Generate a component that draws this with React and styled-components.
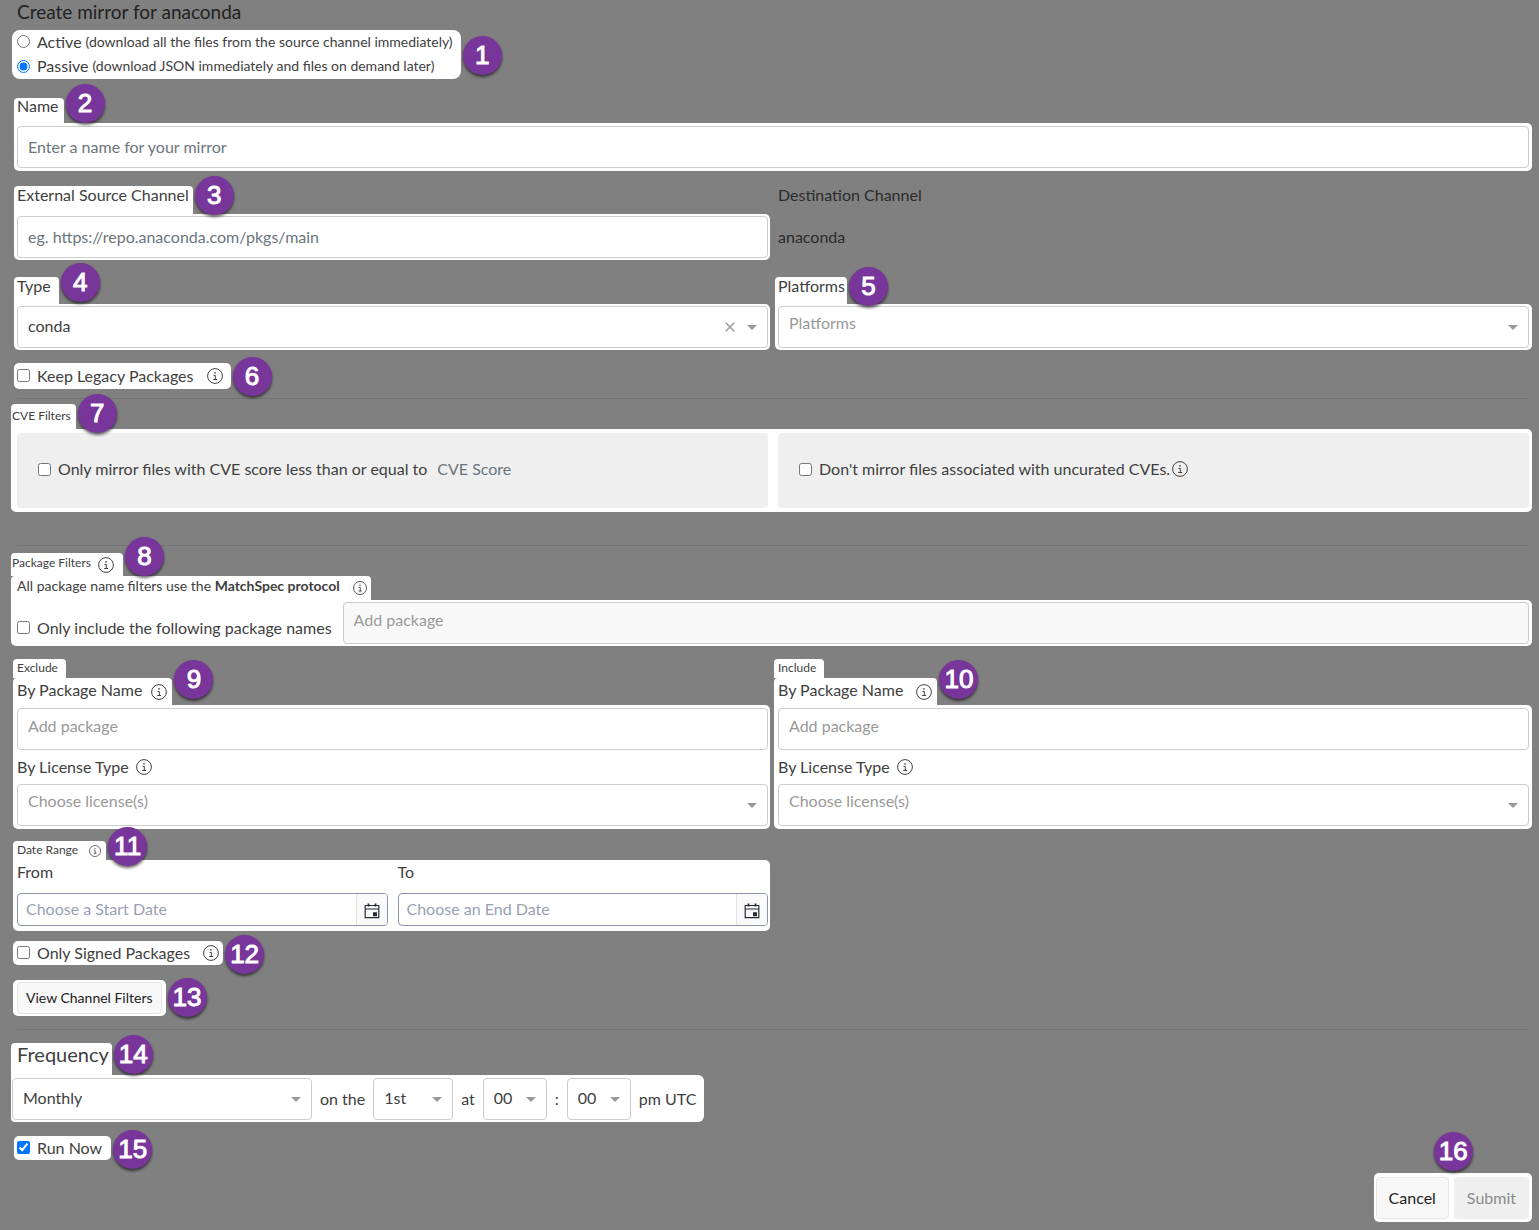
import React from 'react'
import styled, { createGlobalStyle } from 'styled-components'

const GlobalStyle = createGlobalStyle`
  * {
    box-sizing: border-box;
  }

  body {
    margin: 0;
    background: #808080;
    color: #404040;
    font: 16px/24px Lato, "Open Sans", sans-serif;
  }

  input, select, button {
    font: inherit;
    color: inherit;
    margin: 0;
  }
`

const Form = styled.form`
  padding: 0 10px 8px 17px;
  white-space: nowrap;
`

const Title = styled.h1`
  margin: 0;
  height: 30px;
  font-size: 19px;
  font-weight: 400;
  line-height: 24px;
  color: #222;
`

// White area behind a group; it reaches $out px past the content on the left
const Panel = styled.div`
  margin: 0 -3px 0 -${({ $out }) => $out || 3}px;
  padding: ${({ $pad }) => $pad || 2}px 3px ${({ $pad }) => $pad || 2}px ${({ $out }) => $out || 3}px;
  background: #fff;
  border-radius: 0 5px 5px 5px;
`

const DatePanel = styled(Panel)`
  padding-top: 0;
`

const Columns = styled.div`
  display: grid;
  grid-template-columns: 1fr 1fr;
  gap: 10px;

  > div:first-child > ${Panel} {
    margin-right: -2px;
    padding-right: 2px;
  }
`

const Section = styled.div`
  margin-top: ${({ $top }) => $top || 0}px;
`

const Tab = styled.div`
  position: relative;
  display: flex;
  align-items: flex-start;
  width: fit-content;
  height: ${({ $height }) => $height || 27}px;
  margin-left: -${({ $out }) => $out || 3}px;
  padding: 0 ${({ $end }) => $end || 4}px 0 ${({ $inset }) => $inset || 3}px;
  background: #fff;
  border-radius: 4px 4px 0 0;
  font-size: ${({ $size }) => $size || 16}px;
  line-height: ${({ $line }) => $line || 18}px;

  svg {
    align-self: center;
  }
`

const Chip = styled.div`
  position: relative;
  width: fit-content;
  margin-left: -${({ $out }) => $out || 3}px;
  padding: ${({ $pad }) => $pad || 0}px ${({ $end }) => $end || 8}px ${({ $pad }) => $pad || 0}px ${({ $out }) => $out || 3}px;
  background: #fff;
  border-radius: ${({ $radius }) => $radius || 5}px;
`

const Badge = styled.span`
  position: absolute;
  z-index: 1;
  top: ${({ $rise }) => -$rise}px;
  left: calc(100% + 2px);
  width: 39px;
  height: 39px;
  border-radius: 50%;
  background: #78359a;
  box-shadow: 0 2px 3px rgba(0, 0, 0, .6);
  color: #fff;
  font: 26px/38px "Liberation Sans", Arial, sans-serif;
  -webkit-text-stroke: 1px #fff;
  text-align: center;
`

const Option = styled.label`
  display: flex;
  align-items: center;
  height: ${({ $height }) => $height || 24}px;
  padding-bottom: 1px;

  input {
    flex: none;
    width: 13px;
    height: 13px;
    margin-right: 7px;
  }
`

const Hint = styled.small`
  margin-left: 4px;
  font-size: 14px;
`

const TextInput = styled.input`
  display: block;
  width: 100%;
  height: 42px;
  padding: ${({ $raised }) => ($raised ? '0 10px 8px' : '0 10px 2px')};
  border: 1px solid #ccc;
  border-radius: 4px;
  background: ${({ disabled }) => (disabled ? '#f9f9f9' : '#fff')};

  &::placeholder {
    color: ${({ $raised }) => ($raised ? '#999' : '#6c757d')};
    opacity: 1;
  }
`

const SelectBox = styled.div`
  position: relative;
  width: ${({ $width }) => ($width ? `${$width}px` : '100%')};

  > svg {
    position: absolute;
    right: 11px;
    top: 19px;
    pointer-events: none;
  }
`

const SelectInput = styled.select`
  appearance: none;
  display: block;
  width: 100%;
  height: 42px;
  padding: ${({ $empty }) => ($empty ? '0 10px 8px' : '0 10px 2px')};
  border: 1px solid #ccc;
  border-radius: 4px;
  background: #fff;
  color: ${({ $empty }) => ($empty ? '#999' : '#404040')};
`

const ClearButton = styled.button`
  position: absolute;
  top: 12px;
  right: 30px;
  width: 17px;
  height: 18px;
  padding: 0;
  border: 0;
  background: none;

  svg {
    display: block;
    margin: 0 auto;
  }
`

const Destination = styled.dl`
  margin: 0;
  color: #2b2b2b;

  dt {
    height: 30px;
    line-height: 18px;
  }

  dd {
    margin: 0;
    line-height: 42px;
  }
`

const Rule = styled.hr`
  height: 1px;
  margin: ${({ $top, $bottom }) => `${$top}px 0 ${$bottom}px`};
  border: 0;
  background: #747474;
`

const CveCard = styled.div`
  display: flex;
  align-items: center;
  height: 75px;
  padding: 0 0 2px 21px;
  border-radius: 4px;
  background: #efefef;
`

const ScoreInput = styled.input`
  width: 100px;
  margin-left: 10px;
  padding: 0 0 1px;
  border: 0;
  background: none;

  &::placeholder {
    color: #6c757d;
    opacity: 1;
  }
`

const PackageRow = styled.div`
  display: flex;
  align-items: center;
  gap: 11px;

  label {
    margin-top: 10px;
  }

  input[type='text'] {
    flex: 1;
  }
`

const FieldLabel = styled.label`
  display: flex;
  align-items: center;
  height: 34px;
`

const DateLabel = styled.label`
  display: block;
  height: 33px;
`

const DateBox = styled.div`
  display: flex;
  height: 33px;
  overflow: hidden;
  border: 1px solid #8b93a7;
  border-radius: 4px;

  input {
    flex: 1;
    min-width: 0;
    padding: 0 8px 2px;
    border: 0;
    background: none;
  }

  input::placeholder {
    color: #9a9fb5;
    opacity: 1;
  }

  button {
    width: 31px;
    padding: 0;
    border: 0;
    border-left: 1px solid #e4e4e7;
    background: #fafafa;
  }

  svg {
    display: block;
    margin: 2px auto 0;
  }
`

const Button = styled.button`
  display: block;
  height: ${({ $small }) => ($small ? 32 : 42)}px;
  padding: 0 ${({ $small }) => ($small ? 8 : 12)}px 1px;
  border: 1px solid ${({ disabled }) => (disabled ? '#efefef' : '#e6e6e6')};
  border-radius: 4px;
  background: ${({ disabled }) => (disabled ? '#efefef' : '#f8f8f8')};
  color: ${({ disabled }) => (disabled ? '#8a8a8a' : '#222')};
  font-size: ${({ $small }) => ($small ? 14 : 16)}px;
`

const Schedule = styled.div`
  display: flex;
  align-items: center;
  gap: 8px;
  width: fit-content;
  margin-left: -6px;
  padding: 3px 8px 2px 1px;
  border-radius: 0 6px 6px 4px;
  background: #fff;
`

const Footer = styled.div`
  position: relative;
  display: flex;
  gap: 5px;
  width: fit-content;
  margin: 13px -3px 0 auto;
  padding: 4px 3px 3px 2px;
  border-radius: 5px;
  background: #fff;

  ${Badge} {
    left: 50%;
    margin-left: -19px;
  }
`

const Info = ({ size = 16, gap = 7 }) => (
  <svg width={size} height={size} viewBox="0 0 16 16" fill="none" stroke="currentColor" style={{ marginLeft: gap, flex: 'none' }}>
    <circle cx="8" cy="8" r="7.4" />
    <circle cx="8" cy="4.9" r=".8" fill="currentColor" stroke="none" />
    <path d="M6.5 7.4h1.8v4M6.2 11.5h3.9" />
  </svg>
)

const Caret = () => (
  <svg width="10" height="5" viewBox="0 0 10 5">
    <path d="M0 0h10L5 5z" fill="#999" />
  </svg>
)

const Cross = () => (
  <svg width="10" height="10" viewBox="0 0 10 10" stroke="#999" strokeWidth="1.4">
    <path d="M.8 .8l8.4 8.4M9.2 .8L.8 9.2" />
  </svg>
)

const CalendarIcon = () => (
  <svg width="16" height="16" viewBox="0 0 16 16" fill="none" stroke="#272b36">
    <path d="M1.2 2.5h13.6v12.2H1.2zM1.2 6h13.6" strokeWidth="1.2" />
    <path d="M4.5 .5v3M11.5 .5v3" strokeWidth="1.8" />
    <path d="M9 9.2h4v4H9z" fill="#272b36" stroke="none" />
  </svg>
)

const Select = ({ id, value, width, empty, label, children }) => (
  <SelectBox $width={width}>
    <SelectInput id={id} aria-label={label} $empty={empty} defaultValue={value}>
      <option>{value}</option>
    </SelectInput>
    {children}
    <Caret />
  </SelectBox>
)

const Check = ({ children, height, ...rest }) => (
  <Option $height={height}>
    <input type="checkbox" {...rest} />
    {children}
  </Option>
)

const PackageRules = ({ title, id, badge, gap }) => (
  <div>
    <Tab $out={4} $inset={4} $height={19} $size={12} $line={17} $end={8}>{title}</Tab>
    <Tab $out={4} $inset={4} $line={24} $end={5}>
      <label htmlFor={`${id}-name`}>By Package Name</label>
      <Info gap={gap} />
      <Badge $rise={18}>{badge}</Badge>
    </Tab>
    <Panel $out={4} $pad={3}>
      <TextInput id={`${id}-name`} type="text" placeholder="Add package" $raised />
      <FieldLabel htmlFor={`${id}-license`}>By License Type<Info /></FieldLabel>
      <Select id={`${id}-license`} value="Choose license(s)" empty />
    </Panel>
  </div>
)

const DateField = ({ id, label, placeholder }) => (
  <div>
    <DateLabel htmlFor={id}>{label}</DateLabel>
    <DateBox>
      <input id={id} type="text" placeholder={placeholder} />
      <button type="button" aria-label={placeholder}><CalendarIcon /></button>
    </DateBox>
  </div>
)

const App = () => {
  return (
    <>
      <GlobalStyle />
      <Form>
        <Title>Create mirror for anaconda</Title>

        <Chip $out={5} $radius={8}>
          <Option>
            <input type="radio" name="mode" />
            Active <Hint>(download all the files from the source channel immediately)</Hint>
          </Option>
          <Option $height={25}>
            <input type="radio" name="mode" defaultChecked />
            Passive <Hint>(download JSON immediately and files on demand later)</Hint>
          </Option>
          <Badge $rise={-6}>1</Badge>
        </Chip>

        <Section $top={19}>
          <Tab $height={25} $line={16} $end={5}>
            <label htmlFor="name">Name</label>
            <Badge $rise={14}>2</Badge>
          </Tab>
          <Panel $pad={3}>
            <TextInput id="name" type="text" placeholder="Enter a name for your mirror" />
          </Panel>
        </Section>

        <Section $top={15}>
          <Columns>
            <div>
              <Tab $height={28}>
                <label htmlFor="source">External Source Channel</label>
                <Badge $rise={10}>3</Badge>
              </Tab>
              <Panel>
                <TextInput id="source" type="text" placeholder="eg. https://repo.anaconda.com/pkgs/main" />
              </Panel>
            </div>
            <Destination>
              <dt>Destination Channel</dt>
              <dd>anaconda</dd>
            </Destination>
          </Columns>
        </Section>

        <Section $top={17}>
          <Columns>
            <div>
              <Tab $end={8}>
                <label htmlFor="type">Type</label>
                <Badge $rise={14}>4</Badge>
              </Tab>
              <Panel>
                <Select id="type" value="conda">
                  <ClearButton type="button" aria-label="Clear type"><Cross /></ClearButton>
                </Select>
              </Panel>
            </div>
            <div>
              <Tab $end={2}>
                <label htmlFor="platforms">Platforms</label>
                <Badge $rise={10}>5</Badge>
              </Tab>
              <Panel>
                <Select id="platforms" value="Platforms" empty />
              </Panel>
            </div>
          </Columns>
        </Section>

        <Section $top={13}>
          <Chip>
            <Check height={26}>Keep Legacy Packages<Info gap={13} /></Check>
            <Badge $rise={6}>6</Badge>
          </Chip>
        </Section>

        <Rule $top={9} $bottom={5} />

        <Tab $out={6} $inset={1} $height={25} $size={12} $line={24} $end={5}>
          CVE Filters
          <Badge $rise={10}>7</Badge>
        </Tab>
        <Panel $out={6} $pad={4}>
          <Columns>
            <CveCard>
              <Check>Only mirror files with CVE score less than or equal to</Check>
              <ScoreInput type="text" placeholder="CVE Score" aria-label="CVE Score" />
            </CveCard>
            <CveCard>
              <Check>Don't mirror files associated with uncurated CVEs.<Info gap={2} /></Check>
            </CveCard>
          </Columns>
        </Panel>

        <Rule $top={33} $bottom={7} />

        <Tab $out={6} $inset={1} $height={23} $size={12} $line={20} $end={9}>
          Package Filters<Info />
          <Badge $rise={16}>8</Badge>
        </Tab>
        <Tab $out={6} $inset={6} $height={24} $size={14} $line={20}>
          <span>All package name filters use the <b>MatchSpec protocol</b></span>
          <Info size={14} gap={13} />
        </Tab>
        <Panel $out={6}>
          <PackageRow>
            <Check>Only include the following package names</Check>
            <TextInput type="text" placeholder="Add package" aria-label="Add package" $raised disabled />
          </PackageRow>
        </Panel>

        <Section $top={13}>
          <Columns>
            <PackageRules title="Exclude" id="exclude" badge="9" gap={9} />
            <PackageRules title="Include" id="include" badge="10" gap={13} />
          </Columns>
        </Section>

        <Section $top={12}>
          <Columns>
            <div>
              <Tab $out={4} $inset={4} $height={19} $size={12} $line={17} $end={5}>
                Date Range<Info size={12} gap={11} />
                <Badge $rise={14}>11</Badge>
              </Tab>
              <DatePanel $out={4} $pad={5}>
                <Columns>
                  <DateField id="from" label="From" placeholder="Choose a Start Date" />
                  <DateField id="to" label="To" placeholder="Choose an End Date" />
                </Columns>
              </DatePanel>
            </div>
          </Columns>
        </Section>

        <Section $top={10}>
          <Chip $out={4} $end={4}>
            <Check>Only Signed Packages<Info gap={13} /></Check>
            <Badge $rise={6}>12</Badge>
          </Chip>
        </Section>

        <Section $top={15}>
          <Chip $out={4} $end={4} $pad={2}>
            <Button type="button" $small>View Channel Filters</Button>
            <Badge $rise={2}>13</Badge>
          </Chip>
        </Section>

        <Rule $top={13} $bottom={13} />

        <Tab $out={6} $inset={6} $height={32} $size={20} $line={22} $end={3}>
          Frequency
          <Badge $rise={8}>14</Badge>
        </Tab>
        <Schedule>
          <Select width={300} value="Monthly" label="Frequency" />
          <span>on the</span>
          <Select width={80} value="1st" label="Day" />
          <span>at</span>
          <Select width={64} value="00" label="Hour" />
          <span>:</span>
          <Select width={64} value="00" label="Minute" />
          <span>pm UTC</span>
        </Schedule>

        <Section $top={14}>
          <Chip $end={9}>
            <Check defaultChecked>Run Now</Check>
            <Badge $rise={6}>15</Badge>
          </Chip>
        </Section>

        <Footer>
          <Button type="button">Cancel</Button>
          <Button type="submit" disabled>Submit</Button>
          <Badge $rise={41}>16</Badge>
        </Footer>
      </Form>
    </>
  )
}

export default App
